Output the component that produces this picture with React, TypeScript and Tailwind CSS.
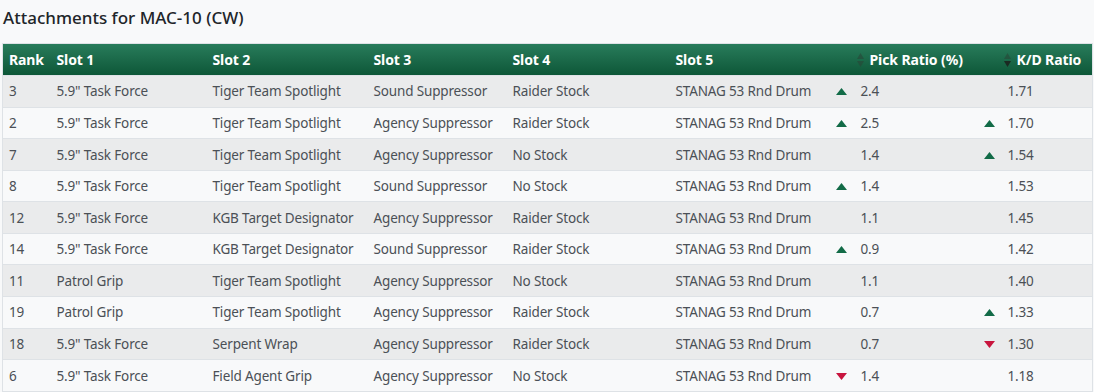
import React from "react";

type Trend = "up" | "down" | null;

interface Row {
  rank: number;
  s1: string;
  s2: string;
  s3: string;
  s4: string;
  s5: string;
  pick: string;
  pickTrend: Trend;
  kd: string;
  kdTrend: Trend;
}

const rows: Row[] = [
  { rank: 3, s1: '5.9" Task Force', s2: "Tiger Team Spotlight", s3: "Sound Suppressor", s4: "Raider Stock", s5: "STANAG 53 Rnd Drum", pick: "2.4", pickTrend: "up", kd: "1.71", kdTrend: null },
  { rank: 2, s1: '5.9" Task Force', s2: "Tiger Team Spotlight", s3: "Agency Suppressor", s4: "Raider Stock", s5: "STANAG 53 Rnd Drum", pick: "2.5", pickTrend: "up", kd: "1.70", kdTrend: "up" },
  { rank: 7, s1: '5.9" Task Force', s2: "Tiger Team Spotlight", s3: "Agency Suppressor", s4: "No Stock", s5: "STANAG 53 Rnd Drum", pick: "1.4", pickTrend: null, kd: "1.54", kdTrend: "up" },
  { rank: 8, s1: '5.9" Task Force', s2: "Tiger Team Spotlight", s3: "Sound Suppressor", s4: "No Stock", s5: "STANAG 53 Rnd Drum", pick: "1.4", pickTrend: "up", kd: "1.53", kdTrend: null },
  { rank: 12, s1: '5.9" Task Force', s2: "KGB Target Designator", s3: "Agency Suppressor", s4: "Raider Stock", s5: "STANAG 53 Rnd Drum", pick: "1.1", pickTrend: null, kd: "1.45", kdTrend: null },
  { rank: 14, s1: '5.9" Task Force', s2: "KGB Target Designator", s3: "Sound Suppressor", s4: "Raider Stock", s5: "STANAG 53 Rnd Drum", pick: "0.9", pickTrend: "up", kd: "1.42", kdTrend: null },
  { rank: 11, s1: "Patrol Grip", s2: "Tiger Team Spotlight", s3: "Agency Suppressor", s4: "No Stock", s5: "STANAG 53 Rnd Drum", pick: "1.1", pickTrend: null, kd: "1.40", kdTrend: null },
  { rank: 19, s1: "Patrol Grip", s2: "Tiger Team Spotlight", s3: "Agency Suppressor", s4: "Raider Stock", s5: "STANAG 53 Rnd Drum", pick: "0.7", pickTrend: null, kd: "1.33", kdTrend: "up" },
  { rank: 18, s1: '5.9" Task Force', s2: "Serpent Wrap", s3: "Agency Suppressor", s4: "Raider Stock", s5: "STANAG 53 Rnd Drum", pick: "0.7", pickTrend: null, kd: "1.30", kdTrend: "down" },
  { rank: 6, s1: '5.9" Task Force', s2: "Field Agent Grip", s3: "Agency Suppressor", s4: "No Stock", s5: "STANAG 53 Rnd Drum", pick: "1.4", pickTrend: "down", kd: "1.18", kdTrend: null },
];

// small triangle shown next to a value when it moved
const TrendArrow: React.FC<{ trend: Trend }> = ({ trend }) => {
  if (!trend) return <span className="inline-block w-[11px]" />;
  return (
    <svg width="11" height="7" viewBox="0 0 11 7" className="inline-block">
      {trend === "up" ? (
        <polygon points="5.5,0 11,7 0,7" fill="#126b47" />
      ) : (
        <polygon points="0,0 11,0 5.5,7" fill="#c8153e" />
      )}
    </svg>
  );
};

// stacked up/down sort carets in the header
const SortIcon: React.FC<{ active?: "asc" | "desc" }> = ({ active }) => (
  <svg width="7" height="14" viewBox="0 0 7 14" className="inline-block">
    <polygon
      points="3.5,0 7,6 0,6"
      fill={active === "asc" ? "#1b2a22" : "rgba(40,70,55,0.6)"}
    />
    <polygon
      points="0,8 7,8 3.5,14"
      fill={active === "desc" ? "#1b2a22" : "rgba(40,70,55,0.6)"}
    />
  </svg>
);

const td =
  "px-[6px] pt-[5.4px] pb-[4.2px] border-t border-[#dee2e6] whitespace-nowrap text-[13.5px] tracking-[-0.15px]";
const th = "px-[6px] py-[5px] text-left font-bold text-white whitespace-nowrap text-[14px] tracking-[-0.1px]";

export default function App() {
  return (
    <div
      className="min-h-screen bg-[#f8f9fa] px-[2px] pt-[6px] leading-[21px] text-[#4b5056]"
      style={{ fontFamily: '"Segoe UI", "Noto Sans", "Liberation Sans", sans-serif' }}
    >
      <h5 className="text-[17px] leading-[24px] font-medium text-[#212529] pl-[1px] mb-[13px]">
        Attachments for MAC-10 (CW)
      </h5>
      <table className="table-fixed border-collapse w-[1090px] border border-[#dee2e6]">
        <colgroup>
          <col className="w-[48px]" />
          <col className="w-[156px]" />
          <col className="w-[161px]" />
          <col className="w-[139px]" />
          <col className="w-[163px]" />
          <col className="w-[160px]" />
          <col className="w-[148px]" />
          <col className="w-[115px]" />
        </colgroup>
        <thead>
          <tr className="bg-gradient-to-b from-[#287c5b] to-[#0c5637]">
            <th className={th}>Rank</th>
            <th className={th}>Slot 1</th>
            <th className={th}>Slot 2</th>
            <th className={th}>Slot 3</th>
            <th className={th}>Slot 4</th>
            <th className={th}>Slot 5</th>
            <th className={th}>
              <span className="flex items-center gap-[6px] pl-[21px]">
                <SortIcon />
                Pick Ratio (%)
              </span>
            </th>
            <th className={th}>
              <span className="flex items-center gap-[6px] pl-[20px]">
                <SortIcon active="desc" />
                K/D Ratio
              </span>
            </th>
          </tr>
        </thead>
        <tbody>
          {rows.map((r, i) => (
            <tr key={i} className={i % 2 === 0 ? "bg-[#eaebec]" : "bg-[#f8f9fa]"}>
              <td className={td}>{r.rank}</td>
              <td className={td}>{r.s1}</td>
              <td className={td}>{r.s2}</td>
              <td className={td}>{r.s3}</td>
              <td className={td}>{r.s4}</td>
              <td className={td}>{r.s5}</td>
              <td className={td}>
                <span className="flex items-center gap-[14px]">
                  <TrendArrow trend={r.pickTrend} />
                  {r.pick}
                </span>
              </td>
              <td className={td}>
                <span className="flex items-center gap-[13px]">
                  <TrendArrow trend={r.kdTrend} />
                  {r.kd}
                </span>
              </td>
            </tr>
          ))}
        </tbody>
      </table>
    </div>
  );
}
